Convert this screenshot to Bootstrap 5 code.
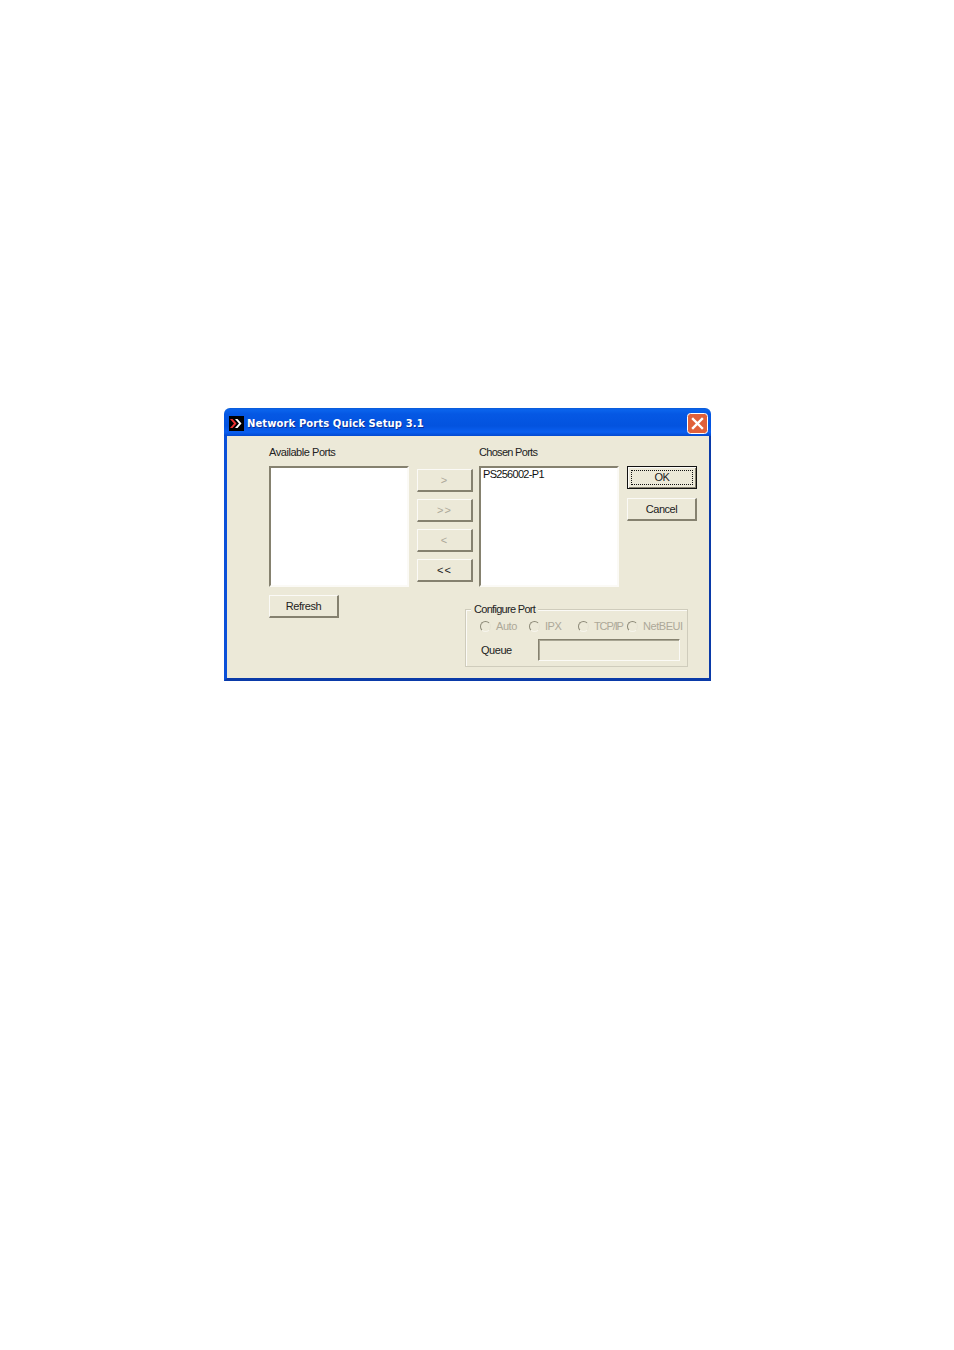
<!DOCTYPE html>
<html lang="en">
<head>
<meta charset="utf-8">
<title>Network Ports Quick Setup 3.1</title>
<link rel="stylesheet" href="https://cdn.jsdelivr.net/npm/bootstrap@5.3.0/dist/css/bootstrap.min.css">
<style>
html,body{background:#fff;height:100%}
.xp-page{padding:408px 0 0 224px;font-family:"Liberation Sans",Arial,sans-serif;font-size:11px;line-height:13px;letter-spacing:-.45px;color:#222}
.xp-window{width:487px;height:273px;background:#ece9d8;border-radius:6px 6px 0 0;overflow:hidden}
.xp-title{height:28px;padding:2px 3px 0 5px;background:linear-gradient(180deg,#0a5bd8 0,#0a63ec 2px,#0558e4 6px,#0353df 18px,#0a5ff0 24px,#0349d0 28px);color:#fff;font-family:"DejaVu Sans",sans-serif;font-weight:700;font-size:10px;letter-spacing:.1px;text-shadow:1px 1px 0 #0a2f9a}
.xp-title-text{padding-top:1px}
.xp-appicon{width:15px;height:15px;flex:none;margin-right:3px}
.xp-close{width:21px;height:21px;flex:none;margin-left:auto}
.xp-client{height:245px;border:solid #0b50d8;border-width:0 2px 3px 3px;border-bottom-color:#0a3aa8;border-right-color:#0a3aa8;padding-left:42px}
.xp-label{height:30px;padding-top:10px;display:block}
.xp-tight{letter-spacing:-.7px}
.xp-list{width:140px;height:121px;background:#fff;border:2px solid;border-color:#85816f #fbfaf6 #fbfaf6 #85816f;padding:0 2px 2px;font-size:11px;letter-spacing:-.7px;color:#111}
.xp-moves{width:56px;margin:33px 6px 0 8px;gap:7px}
.xp-btn{display:block;padding:0;border-radius:0;background:#ece9d8;color:#222;font-size:11px;line-height:13px;letter-spacing:-.45px;border:2px solid;border-color:#fbfaf6 #85816f #85816f #fbfaf6;border-width:1px 2px 2px 1px;text-align:center}
.xp-btn:disabled{color:#aca899;background:#ece9d8;border-color:#fbfaf6 #85816f #85816f #fbfaf6;opacity:1}
.xp-move{height:23px;width:56px;letter-spacing:1px}
.xp-act{width:70px;height:23px}
.xp-side{margin:30px 0 0 8px;gap:9px}
.xp-ok{border:1px solid #111;box-shadow:inset 1px 1px 0 #fbfaf6,inset -1px -1px 0 #85816f;position:relative}
.xp-ok::after{content:"";position:absolute;inset:3px;border:1px dotted #111}
.xp-refresh{margin-top:8px}
.xp-group{position:relative;width:223px;height:58px;margin:22px 0 0 126px;border:1px solid #cfccbc;box-shadow:inset 1px 1px 0 #fbfaf6}
.xp-legend{position:absolute;left:5px;top:-7px;padding:0 3px;background:#ece9d8;letter-spacing:-.7px}
.xp-radios{height:13px;margin:10px 0 0 14px;color:#aca899}
.xp-opt{display:flex;align-items:center;gap:5px}
.xp-opt-a{width:49px}.xp-opt-b{width:49px}.xp-opt-c{width:49px;letter-spacing:-1.100px}
.xp-dot{width:11px;height:11px;border-radius:50%;background:#ece9d8;border:1.500px solid;border-color:#8d8a78 #e6e3d3 #f6f4ec #8d8a78;flex:none}
.xp-qrow{margin:6px 0 0 15px;height:22px}
.xp-qlabel{width:57px;padding-top:5px}
.xp-qbox{width:142px;height:22px;background:#ece9d8;border:1px solid;border-color:#85816f #fbfaf6 #fbfaf6 #85816f;box-shadow:inset 1px 1px 0 #a8a593}
</style>
</head>
<body class="m-0">
<div class="xp-page">
  <div class="xp-window">
    <div class="xp-title d-flex align-items-center">
      <svg class="xp-appicon" viewBox="0 0 15 15"><rect width="15" height="15" fill="#000"/><path d="M1 3l4 4.500-4 4.500h2.500l4-4.500-4-4.500z" fill="#f03030"/><path d="M6 3l4 4.500-4 4.500h2.500l4-4.500-4-4.500z" fill="#fff"/></svg>
      <span class="xp-title-text">Network Ports Quick Setup 3.1</span>
      <svg class="xp-close" viewBox="0 0 21 21"><rect x=".5" y=".5" width="20" height="20" rx="3" fill="#e0603a" stroke="#fff"/><path d="M6 6l9 9M15 6l-9 9" stroke="#fff" stroke-width="2.400" stroke-linecap="square"/></svg>
    </div>
    <div class="xp-client">
      <div class="d-flex">
        <div>
          <span class="xp-label">Available Ports</span>
          <div class="xp-list"></div>
        </div>
        <div class="xp-moves d-flex flex-column">
          <button class="xp-btn xp-move" disabled>&gt;</button>
          <button class="xp-btn xp-move" disabled>&gt;&gt;</button>
          <button class="xp-btn xp-move" disabled>&lt;</button>
          <button class="xp-btn xp-move">&lt;&lt;</button>
        </div>
        <div>
          <span class="xp-label xp-tight">Chosen Ports</span>
          <div class="xp-list">PS256002-P1</div>
        </div>
        <div class="xp-side d-flex flex-column">
          <button class="xp-btn xp-act xp-ok">OK</button>
          <button class="xp-btn xp-act">Cancel</button>
        </div>
      </div>
      <div class="d-flex align-items-start">
        <button class="xp-btn xp-act xp-refresh">Refresh</button>
        <div class="xp-group">
          <span class="xp-legend">Configure Port</span>
          <div class="xp-radios d-flex">
            <div class="xp-opt xp-opt-a"><span class="xp-dot"></span>Auto</div>
            <div class="xp-opt xp-opt-b"><span class="xp-dot"></span>IPX</div>
            <div class="xp-opt xp-opt-c"><span class="xp-dot"></span>TCP/IP</div>
            <div class="xp-opt"><span class="xp-dot"></span>NetBEUI</div>
          </div>
          <div class="xp-qrow d-flex">
            <span class="xp-qlabel">Queue</span>
            <div class="xp-qbox"></div>
          </div>
        </div>
      </div>
    </div>
  </div>
</div>
<script src="https://cdn.jsdelivr.net/npm/bootstrap@5.3.0/dist/js/bootstrap.bundle.min.js"></script>
</body>
</html>
